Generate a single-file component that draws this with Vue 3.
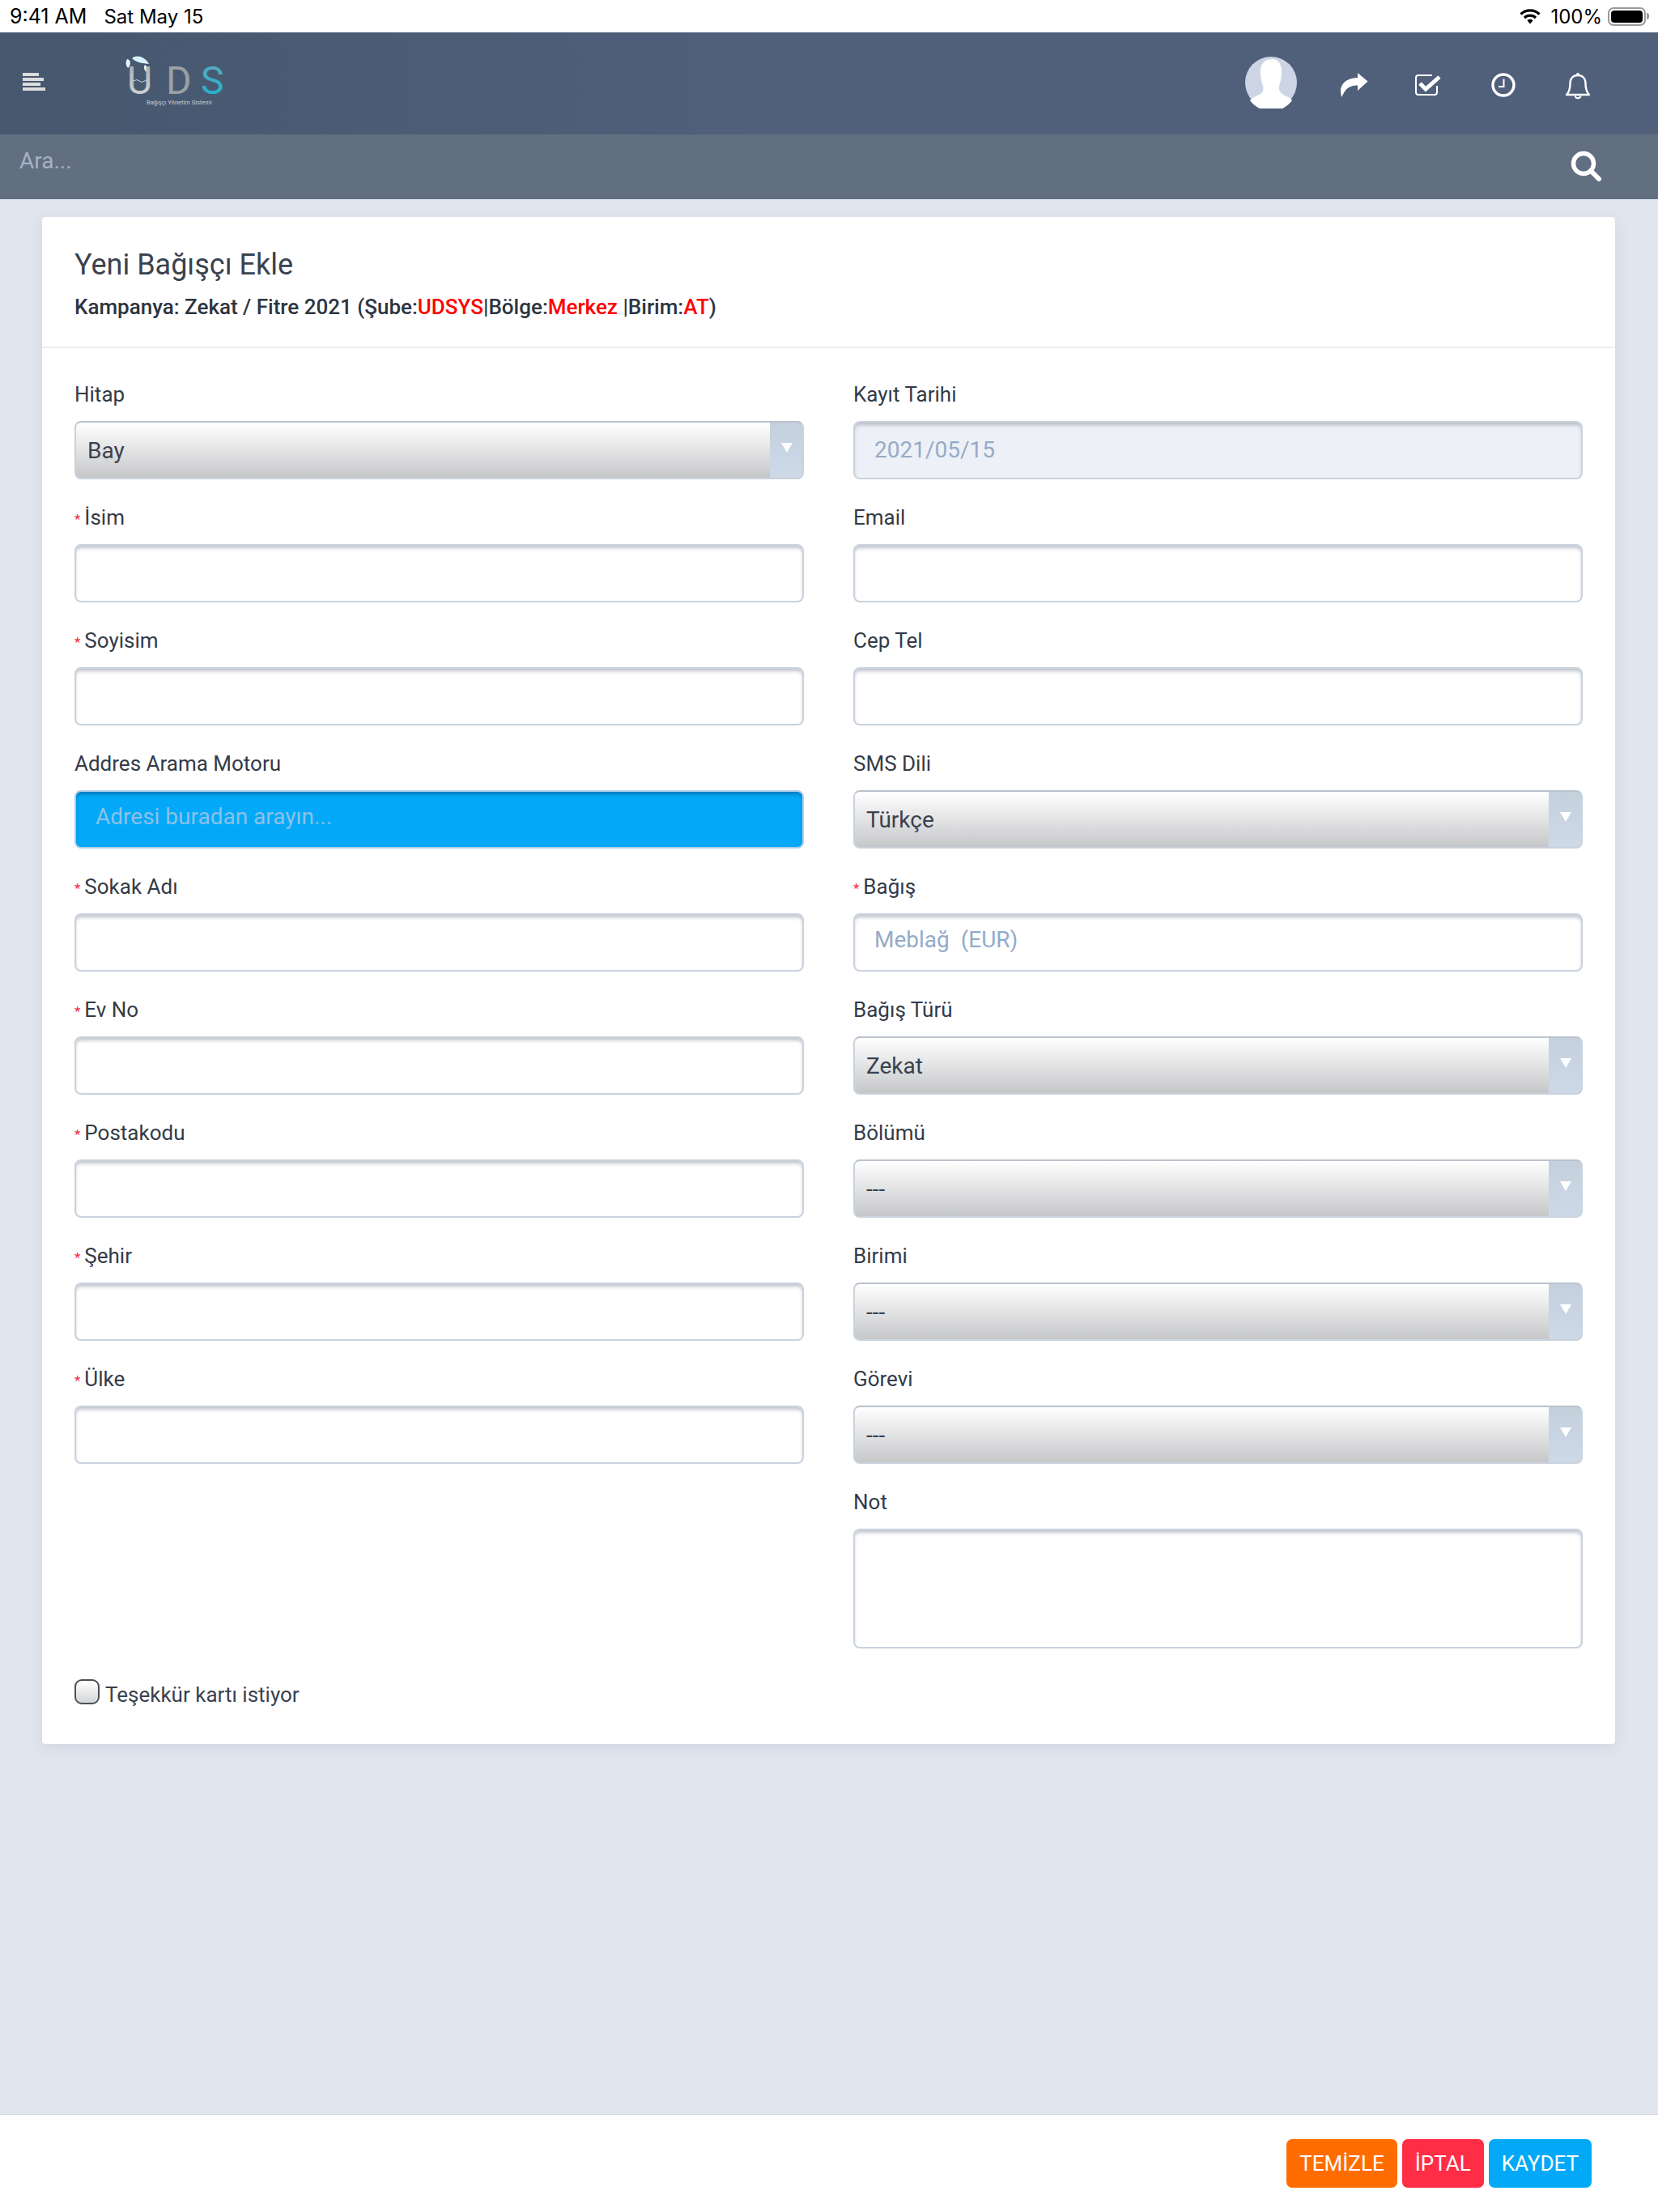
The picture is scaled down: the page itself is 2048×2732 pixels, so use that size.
<template>
  <div class="page">
    <div class="status">
      <span class="time">9:41 AM</span>
      <span class="date">Sat May 15</span>
      <span class="status-right">
        <svg class="wifi" width="26" height="20" viewBox="0 0 26 20">
          <path d="M1.5 7.5a16.5 16.5 0 0 1 23 0" fill="none" stroke="#000" stroke-width="3.2" />
          <path d="M6 12a10 10 0 0 1 14 0" fill="none" stroke="#000" stroke-width="3.2" />
          <path d="M9.5 15.3a5 5 0 0 1 7 0L13 19.5z" fill="#000" />
        </svg>
        <span class="pct">100%</span>
        <span class="battery"><i></i></span>
        <span class="nub"></span>
      </span>
    </div>

    <header class="topbar">
      <div class="burger"><i></i><i></i><i></i><i></i></div>
      <svg class="logo" width="140" height="70" viewBox="0 0 140 70">
        <defs>
          <linearGradient id="uGrad" x1="0" y1="0" x2="0" y2="1">
            <stop offset="0" stop-color="#a4a8ad" />
            <stop offset="1" stop-color="#dadada" />
          </linearGradient>
          <linearGradient id="sGrad" x1="0" y1="0" x2="0" y2="1">
            <stop offset="0" stop-color="#66a9bb" />
            <stop offset="1" stop-color="#14b2d2" />
          </linearGradient>
        </defs>
        <path d="M8 4C14 -1 24 2 29 11C22 10 14 10 8 4Z" fill="#d8f2fb" />
        <path d="M2 5C7 6 7 12 3 16C0 12 0 9 2 5Z" fill="#e4f5fb" />
        <path d="M24 12C27 14 27 18 26 21C23 19 22 15 24 12Z" fill="#e4f5fb" />
        <text x="2" y="48" class="logo-letter" fill="url(#uGrad)">U</text>
        <path d="M10 32q4-3 7 0t7 0t4-1" fill="none" stroke="#cfd3d6" stroke-width="1" />
        <text x="50" y="48" class="logo-letter" fill="#9aa0a6">D</text>
        <text x="93" y="48" class="logo-letter" fill="url(#sGrad)">S</text>
        <text x="26" y="61" class="logo-sub">Bağışçı Yönetim Sistemi</text>
      </svg>
      <div class="top-icons">
        <svg class="avatar" width="64" height="64" viewBox="0 0 64 64">
          <circle cx="32" cy="32" r="32" fill="#cdd5e5" />
          <path d="M19 18C19 7 26 3 33 3C41 3 45 9 45 19C45 28 43 32 42 37C41 42 44 45 49 48C54 50 57 52 58 54A32 32 0 0 1 6 54C8 51 13 49 17 47C22 45 23 41 22 36C20 31 19 26 19 18Z" fill="#fff" />
        </svg>
        <svg class="share" width="35" height="30" viewBox="0 0 35 30">
          <path d="M22 0L34.5 10.5L22 22V15.5C14 15 7 18 2.5 30C-2 19 3 6.5 22 6Z" fill="#fff" />
        </svg>
        <svg class="check" width="33" height="27" viewBox="0 0 33 27">
          <path d="M21 2H4A3 3 0 0 0 1 5V23A3 3 0 0 0 4 26H24A3 3 0 0 0 27 23V15" fill="none" stroke="#fff" stroke-width="2" />
          <path d="M6 12L13 19L30 4" fill="none" stroke="#fff" stroke-width="5" />
        </svg>
        <svg class="clock" width="30" height="30" viewBox="0 0 30 30">
          <circle cx="15" cy="15" r="13" fill="none" stroke="#fff" stroke-width="3.4" />
          <path d="M15.500 7.500V17H9" fill="none" stroke="#fff" stroke-width="2" />
        </svg>
        <svg class="bell" width="32" height="34" viewBox="0 0 32 34">
          <path d="M16 1V4" stroke="#fff" stroke-width="3" />
          <path d="M2 28C6 24 6.500 19 6.500 14C6.500 8 10 4 16 4C22 4 25.500 8 25.500 14C25.500 19 26 24 30 28Z" fill="none" stroke="#fff" stroke-width="2.4" stroke-linejoin="round" />
          <path d="M12.500 29.500A3.600 3.600 0 0 0 19.500 29.500" fill="none" stroke="#fff" stroke-width="2" />
        </svg>
      </div>
    </header>

    <div class="searchbar">
      <input type="text" placeholder="Ara..." />
      <svg width="38" height="38" viewBox="0 0 38 38">
        <circle cx="16" cy="16" r="12.500" fill="none" stroke="#fff" stroke-width="5.500" />
        <path d="M25 25L35 35" stroke="#fff" stroke-width="6" stroke-linecap="round" />
      </svg>
    </div>

    <main class="content">
      <section class="card">
        <div class="card-head">
          <h3>Yeni Bağışçı Ekle</h3>
          <p>Kampanya: Zekat / Fitre 2021 (Şube:<b>UDSYS</b>|Bölge:<b>Merkez</b> |Birim:<b>AT</b>)</p>
        </div>
        <form class="card-body">
          <div class="cols">
            <div class="col" v-for="(col, i) in columns" :key="i">
              <div class="field" v-for="f in col" :key="f.label">
                <label><span v-if="f.req" class="req">*</span>{{ f.label }}</label>
                <div v-if="f.options" class="select-wrap">
                  <select>
                    <option v-for="o in f.options" :key="o">{{ o }}</option>
                  </select>
                </div>
                <textarea v-else-if="f.area"></textarea>
                <input v-else type="text" :class="f.cls" :placeholder="f.ph" />
              </div>
            </div>
          </div>
          <label class="thanks"><span class="box"></span><span class="thanks-text">Teşekkür kartı istiyor</span></label>
        </form>
      </section>
    </main>

    <footer class="bottombar">
      <button class="orange">TEMİZLE</button>
      <button class="red">İPTAL</button>
      <button class="blue">KAYDET</button>
    </footer>
  </div>
</template>

<script setup>
const dash = ['---']

const columns = [
  [
    { label: 'Hitap', options: ['Bay', 'Bayan'] },
    { label: 'İsim', req: true },
    { label: 'Soyisim', req: true },
    { label: 'Addres Arama Motoru', ph: 'Adresi buradan arayın...', cls: 'address' },
    { label: 'Sokak Adı', req: true },
    { label: 'Ev No', req: true },
    { label: 'Postakodu', req: true },
    { label: 'Şehir', req: true },
    { label: 'Ülke', req: true }
  ],
  [
    { label: 'Kayıt Tarihi', ph: '2021/05/15', cls: 'disabled' },
    { label: 'Email' },
    { label: 'Cep Tel' },
    { label: 'SMS Dili', options: ['Türkçe'] },
    { label: 'Bağış', req: true, ph: 'Meblağ  (EUR)' },
    { label: 'Bağış Türü', options: ['Zekat', 'Fitre'] },
    { label: 'Bölümü', options: dash },
    { label: 'Birimi', options: dash },
    { label: 'Görevi', options: dash },
    { label: 'Not', area: true }
  ]
]
</script>

<style>
body {
  background: #e1e5ee;
}
</style>

<style scoped>
.page {
  display: flex;
  flex-direction: column;
  height: 2732px;
  font-family: Roboto, "Liberation Sans", sans-serif;
  color: #3a424e;
}

.status {
  display: flex;
  align-items: center;
  height: 40px;
  padding: 0 11px 0 12px;
  box-sizing: border-box;
  background: #fff;
  color: #000;
  font-family: Inter, "Liberation Sans", sans-serif;
  font-size: 25px;
}
.date {
  margin-left: 21px;
  font-size: 24px;
}
.status-right {
  margin-left: auto;
  display: flex;
  align-items: center;
}
.pct {
  margin-left: 12px;
  font-size: 24px;
}
.battery {
  width: 47px;
  height: 23px;
  margin-left: 7px;
  box-sizing: border-box;
  border: 2px solid #9a9a9a;
  border-radius: 7px;
  padding: 2px;
  display: flex;
}
.battery i {
  flex: 1;
  background: #000;
  border-radius: 4px;
}
.nub {
  width: 3px;
  height: 8px;
  margin-left: 1px;
  background: #9a9a9a;
  border-radius: 0 3px 3px 0;
}

.topbar {
  display: flex;
  align-items: flex-start;
  height: 126px;
  background: linear-gradient(90deg, #45586e, #505f7a 45%);
  position: relative;
}
.burger {
  display: flex;
  flex-direction: column;
  gap: 2px;
  margin: 50px 0 0 28px;
  width: 28px;
}
.burger i {
  display: block;
  height: 4px;
  background: #dcdcdc;
}
.burger i:nth-child(1) { width: 20px; }
.burger i:nth-child(2) { width: 26px; }
.burger i:nth-child(3) { width: 22px; }
.burger i:nth-child(4) { width: 28px; }

.logo {
  margin: 28px 0 0 99px;
}
.logo-letter {
  font-family: Roboto, sans-serif;
  font-weight: 400;
  font-size: 48px;
}
.logo-sub {
  font-family: Roboto, sans-serif;
  font-size: 7.500px;
  fill: #c3cbd6;
}

.top-icons {
  margin-left: auto;
  position: relative;
  width: 510px;
  height: 126px;
}
/* icons sit on the header at their own spots */
.top-icons svg {
  position: absolute;
}
.avatar { left: 0; top: 30px; }
.share { left: 117px; top: 50px; }
.check { left: 210px; top: 51px; }
.clock { left: 304px; top: 50px; }
.bell { left: 395px; top: 49px; }

.searchbar {
  display: flex;
  align-items: center;
  height: 80px;
  background: #626f80;
  padding-right: 70px;
}
.searchbar input {
  flex: 1;
  height: 80px;
  border: 0;
  outline: 0;
  background: transparent;
  padding: 0 0 16px 24px;
  box-sizing: border-box;
  font-family: Roboto, sans-serif;
  font-size: 28px;
}
.searchbar input::placeholder {
  color: #a5b2c4;
  opacity: 1;
}
.searchbar svg {
  margin-bottom: 2px;
}

.content {
  flex: 1;
  padding: 22px 53px 0 52px;
  background: #e1e5ee;
}
.card {
  background: #fff;
  border-radius: 4px;
  box-shadow: 0 4px 18px rgba(120, 130, 160, 0.16);
}
.card-head {
  height: 162px;
  padding: 38px 40px 0;
  box-sizing: border-box;
  border-bottom: 2px solid #eceef1;
}
.card-head h3 {
  margin: 0;
  font-size: 36px;
  line-height: 42px;
  font-weight: 400;
  color: #3a424e;
}
.card-head p {
  margin: 15px 0 0;
  font-size: 26px;
  line-height: 32px;
  font-weight: 500;
  color: #2d3540;
}
.card-head b {
  font-weight: 500;
  color: #f00;
}

.card-body {
  padding: 40px 40px 49px;
}
.cols {
  display: flex;
  gap: 61px;
}
.col {
  flex: 1;
}
.field {
  margin-bottom: 30px;
}
.field label {
  display: block;
  height: 34px;
  line-height: 34px;
  margin-bottom: 16px;
  font-size: 26px;
  color: #333b47;
}
.req {
  color: #f4283c;
  font-size: 17px;
  margin-right: 5px;
  vertical-align: 1px;
}

input,
textarea,
select {
  display: block;
  width: 100%;
  box-sizing: border-box;
  font-family: Roboto, sans-serif;
  font-size: 28px;
  color: #3a424e;
  outline: 0;
  margin: 0;
}
.field input,
.field textarea {
  height: 72px;
  padding: 0 24px 8px;
  border: 2px solid #c9d2dd;
  border-radius: 8px;
  background: #fff;
  box-shadow: inset 0 4px 4px -1px rgba(140, 150, 162, 0.55);
}
.field input::placeholder {
  color: #94abc9;
  opacity: 1;
  white-space: pre;
}
.field textarea {
  height: 148px;
  resize: none;
  display: block;
}
.field input.disabled {
  background: #edf0f6;
  padding-bottom: 2px;
}
.field input.address {
  background: #03a9f8;
  border-color: #aecde8;
  box-shadow: inset 0 4px 4px -1px rgba(10, 100, 160, 0.7);
}
.field input.address::placeholder {
  color: #8cc0e8;
}

.select-wrap {
  position: relative;
}
.select-wrap select {
  appearance: none;
  -webkit-appearance: none;
  height: 72px;
  padding: 0 50px 0 14px;
  border: 2px solid #c9d2dd;
  border-top-color: #bac3cd;
  border-radius: 8px;
  background:
    linear-gradient(#c5d0dd, #cdd9e7) right / 40px 100% no-repeat,
    linear-gradient(#fff, #c6c7c9);
}
/* small arrow on the right part of the select */
.select-wrap::after {
  content: "";
  position: absolute;
  right: 14px;
  top: 27px;
  border-left: 7.500px solid transparent;
  border-right: 7.500px solid transparent;
  border-top: 12px solid #fff;
  pointer-events: none;
}

.thanks {
  display: flex;
  align-items: center;
  gap: 7px;
  margin-top: 8px;
  height: 31px;
  font-size: 26px;
  color: #3a424e;
}
.thanks-text {
  padding-top: 6px;
}
.box {
  width: 31px;
  height: 31px;
  box-sizing: border-box;
  border: 2px solid #4b4f55;
  border-radius: 9px;
  background: linear-gradient(#fff, #d4d5d7);
}

.bottombar {
  display: flex;
  justify-content: flex-end;
  align-items: flex-start;
  height: 121px;
  box-sizing: border-box;
  padding: 30px 82px 0 0;
  gap: 6px;
  background: #fff;
  border-top: 1px solid #d6d9df;
}
.bottombar button {
  height: 60px;
  padding: 0 16px;
  border: 0;
  border-radius: 7px;
  color: #fff;
  font-family: Roboto, sans-serif;
  font-size: 26px;
}
.orange { background: #ff6d00; }
.red { background: #ff2d46; }
.blue { background: #03a9f8; }
</style>
